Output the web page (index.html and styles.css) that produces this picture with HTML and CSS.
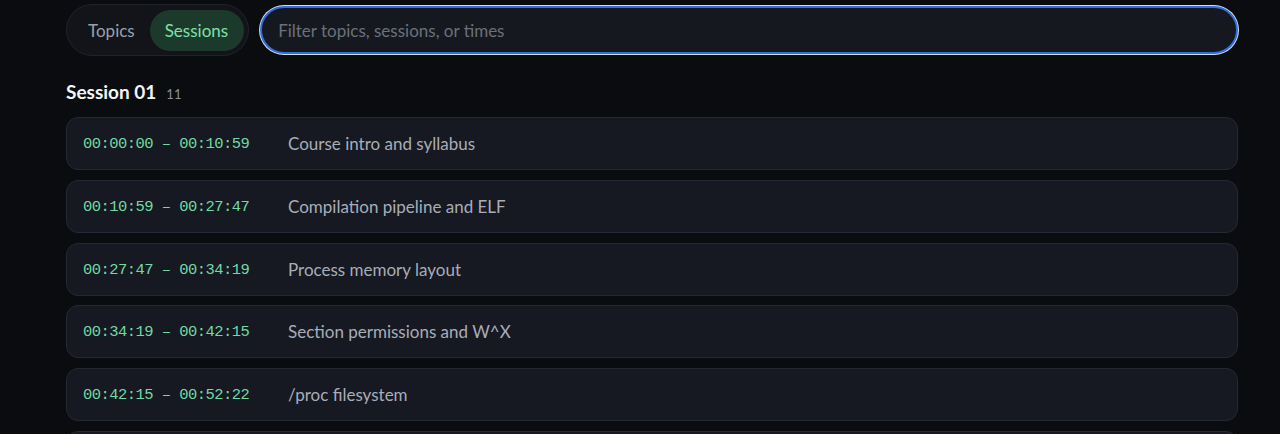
FILE: index.html
```html
<!DOCTYPE html>
<html>
<head>
<meta charset="utf-8">
<link rel="stylesheet" href="styles.css">
</head>
<body>
<div class="page">
  <div class="toolbar">
    <div class="toggle">
      <button class="tab">Topics</button>
      <button class="tab active">Sessions</button>
    </div>
    <div class="search">
      <input type="text" placeholder="Filter topics, sessions, or times">
    </div>
  </div>
  <div class="group">
    <div class="group-head">
      <span class="group-title">Session 01</span>
      <span class="group-count">11</span>
    </div>
    <div class="rows">
      <div class="row"><span class="time">00:00:00 – 00:10:59</span><span class="title">Course intro and syllabus</span></div>
      <div class="row"><span class="time">00:10:59 – 00:27:47</span><span class="title">Compilation pipeline and ELF</span></div>
      <div class="row"><span class="time">00:27:47 – 00:34:19</span><span class="title">Process memory layout</span></div>
      <div class="row"><span class="time">00:34:19 – 00:42:15</span><span class="title">Section permissions and W^X</span></div>
      <div class="row"><span class="time">00:42:15 – 00:52:22</span><span class="title">/proc filesystem</span></div>
      <div class="row"></div>
    </div>
  </div>
</div>
</body>
</html>
```
FILE: styles.css
```css
html, body {
  margin: 0;
  padding: 0;
  background: #0b0c10;
  height: 434px;
  overflow: hidden;
}
body {
  font-family: "Lato", "Open Sans", sans-serif;
  color: #a9aeb9;
}
.page {
  width: 1172px;
  padding: 4px 0 0 66px;
}
.toolbar {
  display: flex;
  align-items: center;
  gap: 11px;
}
.toggle {
  display: flex;
  align-items: center;
  height: 52px;
  box-sizing: border-box;
  padding: 4px;
  border: 1px solid #20232b;
  background: #12141a;
  border-radius: 26px;
}
.tab {
  font-family: inherit;
  font-size: 17px;
  border: none;
  background: transparent;
  color: #9aa0ab;
  height: 41px;
  padding: 0 15px 0 17px;
  border-radius: 21px;
  cursor: pointer;
}
.tab.active {
  background: #1b3a2b;
  color: #7fe0a6;
  padding: 0 16px 0 15px;
}
.search {
  flex: 1;
}
.search input {
  display: block;
  width: 100%;
  box-sizing: border-box;
  height: 48px;
  border: 2px solid #2f6ee0;
  box-shadow: 0 0 0 1px #d4dcea;
  border-radius: 25px;
  background: #161820;
  color: #d0d4dc;
  font-family: inherit;
  font-size: 17px;
  padding: 0 16px;
  outline: none;
}
.search input::placeholder {
  color: #6b707b;
}
.group-head {
  display: flex;
  align-items: baseline;
  gap: 10px;
  margin-top: 24px;
  height: 22px;
}
.group-title {
  font-size: 19px;
  font-weight: 700;
  color: #f4f5f7;
}
.group-count {
  font-size: 13px;
  color: #8a8f99;
}
.rows {
  display: flex;
  flex-direction: column;
  gap: 9.75px;
  margin-top: 15px;
}
.row {
  display: flex;
  align-items: center;
  height: 53px;
  flex: none;
  box-sizing: border-box;
  padding: 0 16px;
  background: #161921;
  border: 1px solid #252933;
  border-radius: 12px;
}
.time {
  font-family: "Liberation Mono", "DejaVu Sans Mono", monospace;
  font-size: 15.5px;
  letter-spacing: -0.55px;
  color: #72d9a3;
  width: 205px;
  flex: none;
  padding-top: 1px;
}
.title {
  font-size: 17px;
  color: #a8adb8;
}
```
